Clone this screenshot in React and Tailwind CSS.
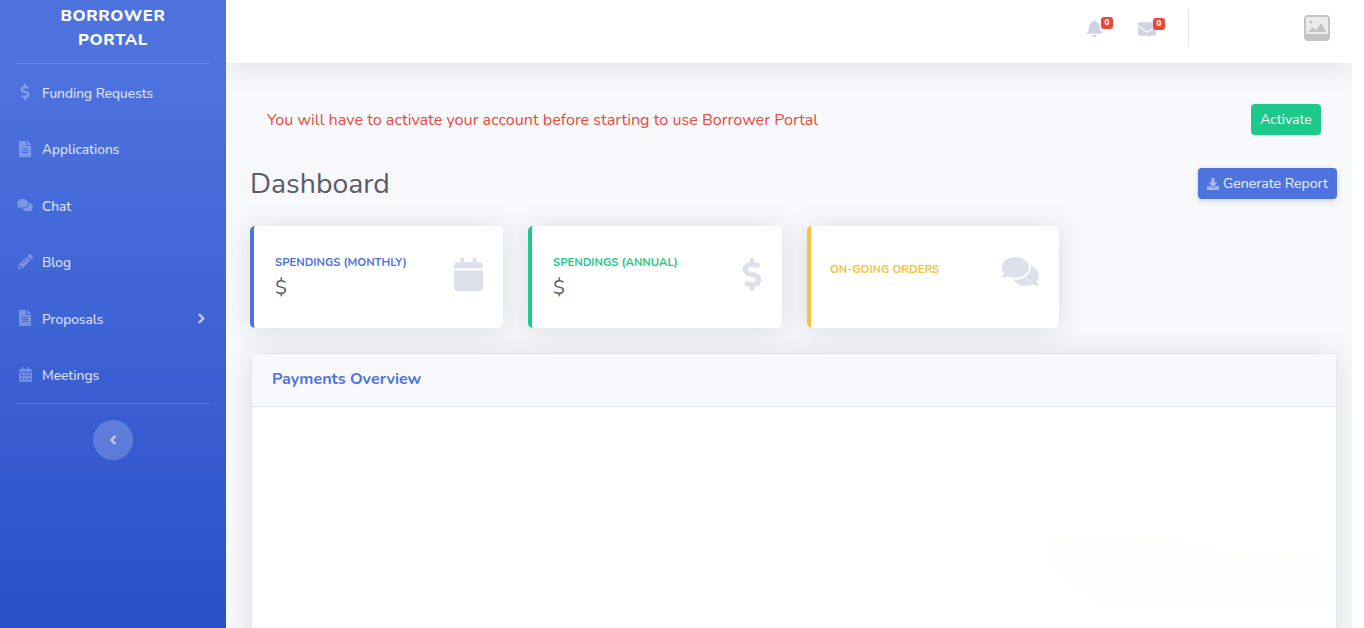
import { FaDollarSign, FaFileAlt, FaComments, FaPencilAlt, FaCalendarAlt, FaChevronRight, FaChevronLeft, FaBell, FaEnvelope, FaDownload, FaCalendar } from 'react-icons/fa';

const NAV = [
  { label: 'Funding Requests', icon: FaDollarSign, iconClass: 'w-[10px] h-[16px] ml-[3px]' },
  { label: 'Applications', icon: FaFileAlt, iconClass: 'w-[12px] h-[16px] ml-[2px]' },
  { label: 'Chat', icon: FaComments, iconClass: 'w-[16px] h-[14px]' },
  { label: 'Blog', icon: FaPencilAlt, iconClass: 'w-[15px] h-[15px] ml-[1px]' },
  { label: 'Proposals', icon: FaFileAlt, iconClass: 'w-[12px] h-[16px] ml-[2px]', arrow: true },
  { label: 'Meetings', icon: FaCalendarAlt, iconClass: 'w-[13px] h-[15px] ml-[2px]' },
];

function Sidebar() {
  return (
    <aside className="w-[226px] shrink-0 h-[628px] bg-gradient-to-b from-[#4e73df] from-10% to-[#2a50c8] px-4">
      <div className="h-[64px] pt-[4px] border-b border-white/15 text-center text-white font-extrabold text-[16.5px] leading-[24px] tracking-[0.6px]">
        BORROWER<br />PORTAL
      </div>
      <nav className="border-b border-white/15">
        {NAV.map(item => (
          <a key={item.label} className="h-[56.5px] flex items-center text-[13.7px] font-medium text-white/80">
            <span className="w-[26px] pl-[1px] flex justify-start text-white/30">
              <item.icon className={item.iconClass} />
            </span>
            <span className="flex-1 pt-[4px]">{item.label}</span>
            {item.arrow && <FaChevronRight stroke="currentColor" strokeWidth={40} className="w-[9px] h-[11px] mr-[4px] text-white/60" />}
          </a>
        ))}
      </nav>
      <div className="flex justify-center mt-[16px]">
        <button className="w-10 h-10 rounded-full bg-white/20 flex items-center justify-center text-white/60">
          <FaChevronLeft stroke="currentColor" strokeWidth={40} className="w-[8px] h-[10px]" />
        </button>
      </div>
    </aside>
  );
}

function Badge({ className }) {
  return (
    <span className={`absolute w-[12px] h-[12px] rounded-[3px] bg-[#e74a3b] text-white text-[8px] font-extrabold leading-[12px] text-center ${className}`}>0</span>
  );
}

function Topbar() {
  return (
    <header className="h-[63px] shrink-0 bg-white shadow-[0_2.4px_28px_rgba(58,59,69,0.15)] flex items-center justify-end relative z-10">
      <div className="relative mr-[36px] mt-[-6px] text-[#d1d3e2]">
        <FaBell className="w-[15px] h-[17px]" />
        <Badge className="-top-[3px] left-[14px]" />
      </div>
      <div className="relative mr-[32px] mt-[-6px] text-[#d1d3e2]">
        <FaEnvelope className="w-[18px] h-[18px]" />
        <Badge className="-top-[2px] left-[15px]" />
      </div>
      <div className="w-px h-[38px] bg-[#e3e6f0] mt-[-8px] mr-[115px]" />
      <svg viewBox="0 0 26 26" className="w-[26px] h-[26px] mr-[22px] mt-[-8px]">
        <rect width="26" height="26" rx="4" fill="#c4c4c4" />
        <rect x="2" y="2" width="22" height="17" rx="1" fill="#ececec" />
        <circle cx="7" cy="7" r="1.6" fill="#c4c4c4" />
        <path d="M4 17l5-5 3 3 5-7 5 9z" fill="#c4c4c4" />
      </svg>
    </header>
  );
}

function StatCard({ title, color, border, width, value, icon: Icon, iconClass }) {
  return (
    <div className={`${width} h-[102px] bg-white rounded-[5px] border-l-4 ${border} shadow-[0_2.4px_28px_rgba(58,59,69,0.15)] flex items-center justify-between pl-[21px] pr-[20px]`}>
      <div className={value ? 'pt-[3px]' : 'pb-[14px] -ml-[2px]'}>
        <div className={`text-[11.3px] font-bold uppercase leading-[16px] ${color}`}>{title}</div>
        {value && <div className="text-[20px] leading-[30px] pt-[2px] text-[#5a5c69]">{value}</div>}
      </div>
      <Icon className={`text-[#dddfeb] ${iconClass}`} />
    </div>
  );
}

export default function App() {
  return (
    <div className="w-[1364px] h-[628px] overflow-hidden bg-white flex font-['Nunito','Noto_Sans',sans-serif]">
      <Sidebar />
      <main className="w-[1126px] shrink-0 bg-[#f8f9fc] flex flex-col overflow-hidden">
        <Topbar />
        <div className="pl-[24px] pr-[15px]">
          <div className="flex items-center justify-between mt-[41px] pl-[17px] pr-[16px]">
            <p className="text-[16.15px] pt-[2px] text-[#e74a3b]">You will have to activate your account before starting to use Borrower Portal</p>
            <button className="w-[70px] h-[31px] rounded-[4px] bg-[#1cc88a] text-white text-[14px]">Activate</button>
          </div>
          <div className="flex items-center justify-between mt-[33px]">
            <h1 className="text-[28.4px] leading-[31px] text-[#5a5c69]">Dashboard</h1>
            <button className="w-[139px] h-[31px] rounded-[4px] bg-[#4e73df] text-white/90 text-[14.1px] flex items-center justify-center gap-[4px] shadow-[0_2px_6px_rgba(58,59,69,0.2)]">
              <FaDownload className="w-[12px] h-[12px] text-white/50" />
              Generate Report
            </button>
          </div>
          <div className="flex gap-[25px] mt-[27px]">
            <StatCard title="Spendings (Monthly)" width="w-[253px]" color="text-[#4e73df]" border="border-[#4e73df]" value="$" icon={FaCalendar} iconClass="w-[29px] h-[33px] mb-[5px]" />
            <StatCard title="Spendings (Annual)" width="w-[254px]" color="text-[#1cc88a]" border="border-[#1cc88a]" value="$" icon={FaDollarSign} iconClass="w-[20px] h-[33px] mb-[5px]" />
            <StatCard title="On-going Orders" width="w-[252px]" color="text-[#f6c23e]" border="border-[#f6c23e]" icon={FaComments} iconClass="w-[37px] h-[33px] mb-[11px]" />
          </div>
          <section className="relative mt-[25px] ml-[1px] h-[400px] bg-white rounded-[5px] border border-[#e3e6f0] shadow-[0_2.4px_28px_rgba(58,59,69,0.15)]">
            <div className="h-[53px] bg-[#f8f9fc] border-b border-[#e3e6f0] flex items-center pl-[20px] pb-[2px] text-[16.1px] font-bold text-[#4e73df]">Payments Overview</div>
            {/* barely visible watermark in the chart area */}
            <svg viewBox="0 0 294 84" className="absolute left-[792px] top-[177px] w-[293px] h-[84px]">
              <path d="M3 8C20 0 60 1 130 6C170 12 205 28 240 20C265 14 285 20 293 40V80C230 82 120 84 60 80C30 60 5 40 3 8Z" fill="#fefefd" />
            </svg>
          </section>
        </div>
      </main>
    </div>
  );
}
